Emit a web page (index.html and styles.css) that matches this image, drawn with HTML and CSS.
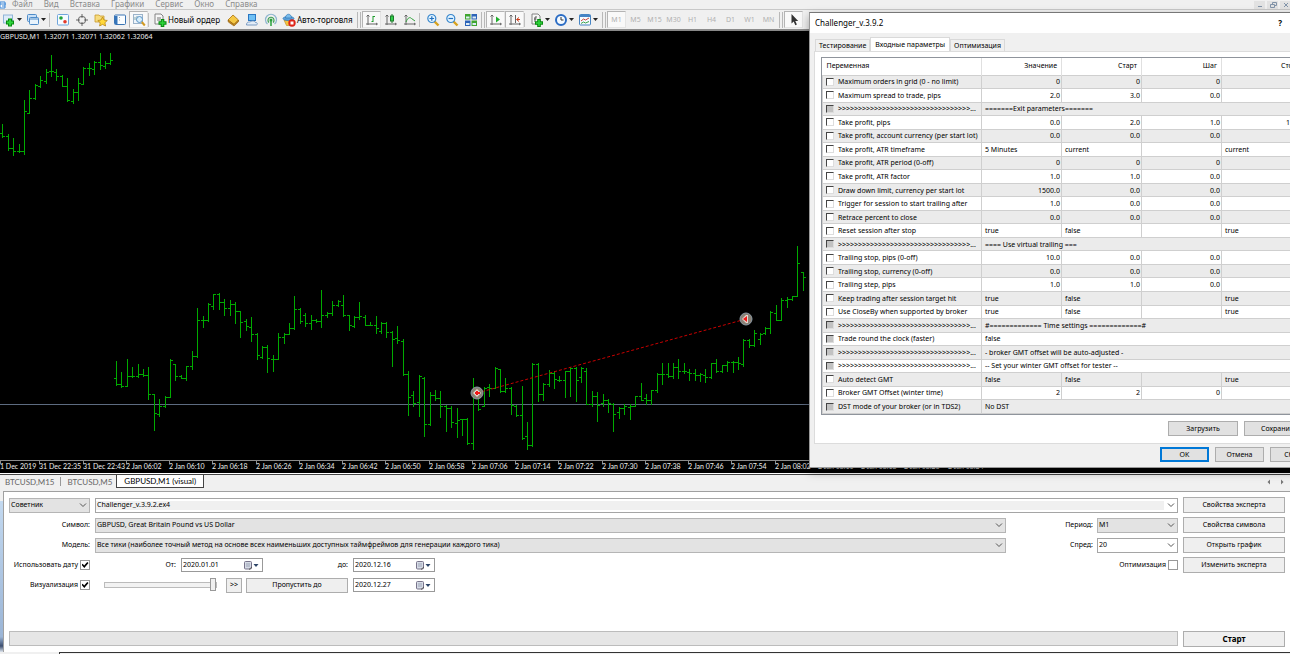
FILE: index.html
```html
<!DOCTYPE html>
<html lang="ru">
<head>
<meta charset="utf-8">
<title>Challenger_v.3.9.2</title>
<link rel="stylesheet" href="styles.css">
</head>
<body>
<svg class="defs" width="0" height="0" aria-hidden="true">
  <symbol id="chev" viewBox="0 0 8 8"><path d="M1 2.5 4 5.5 7 2.5" fill="none" stroke="#555" stroke-width="1"/></symbol>
  <symbol id="drop" viewBox="0 0 5 3"><path d="M0 0H5L2.500 3Z" fill="#222"/></symbol>
  <symbol id="cal" viewBox="0 0 15 9"><rect x=".5" y=".5" width="7" height="7.500" rx="1" fill="#d6dbe6" stroke="#77738a"/><path d="M2 3h4M2 5h4" stroke="#9ba3b5"/><path d="M5 8.500 8 6" stroke="#555"/><path d="M9.500 3h5L12 6Z" fill="#2d4568"/></symbol>
</svg>

<nav class="menubar">
  <svg class="menu-icon" viewBox="0 0 7 8"><path d="M0 1h5v6H0z" fill="#fff" stroke="#3b86d6"/><path d="M0 3h6M2 5h3" stroke="#3b86d6"/></svg>
  <a href="#">Файл</a><a href="#">Вид</a><a href="#">Вставка</a><a href="#">Графики</a><a href="#">Сервис</a><a href="#">Окно</a><a href="#">Справка</a>
  <svg class="winctl" viewBox="0 0 36 8"><path d="M0 0h11v8H0zM13 0h11v8H13zM26 0h10v8H26z" fill="#e2e2e2"/><path d="M4 5.500h4M16.500 3.500h4v3h-4zM18.500 3V1.500h4v3H21M30 2l4 4M34 2l-4 4" fill="none" stroke="#8193a8"/></svg>
</nav>

<div class="toolbar">
  <button class="tb split" aria-label="Новый график"><svg viewBox="0 0 14 14"><rect x="1.500" y="2" width="9" height="8" fill="#dcebf8" stroke="#8fb4d8"/><path d="M8 5.500v8M4 9.500h8" stroke="#088a10" stroke-width="4"/><path d="M8 6.500v6M5 9.500h6" stroke="#2fd53c" stroke-width="2"/></svg><svg class="arr"><use href="#drop"/></svg></button>
  <button class="tb split" aria-label="Профили"><svg viewBox="0 0 14 14"><rect x="1.500" y="1.500" width="9" height="7" rx="1" fill="#c9e0f6" stroke="#4f8cc9"/><rect x="3.500" y="4.500" width="9" height="7" rx="1" fill="#e8f3fc" stroke="#4f8cc9"/><path d="M3.500 6h9" stroke="#4f8cc9"/></svg><svg class="arr"><use href="#drop"/></svg></button>
  <i class="sep"></i>
  <button class="tb" aria-label="Обзор рынка"><svg viewBox="0 0 14 14"><rect x="1.500" y="1.500" width="11" height="10.500" rx="1" fill="#f6fbff" stroke="#6fa5dc"/><circle cx="5" cy="5" r="1.800" fill="#21a33a"/><circle cx="9" cy="8.700" r="1.800" fill="#e3392a"/></svg></button>
  <button class="tb" aria-label="Окно данных"><svg viewBox="0 0 14 14"><circle cx="7" cy="7" r="3.700" fill="none" stroke="#666"/><path d="M7 1v4M7 9v4M1 7h4M9 7h4" stroke="#666"/></svg></button>
  <button class="tb" aria-label="Навигатор"><svg viewBox="0 0 14 14"><path d="M1 2h4l1 1h4v6H1z" fill="#f7dc7e" stroke="#c99a2b" stroke-width=".8"/><path d="m8.500 4 1.500 3 3.300.5-2.400 2.200.7 3.300-3.100-1.600L5.600 13l.6-3.300L3.800 7.500 7 7z" fill="#ffd83a" stroke="#b8861b" stroke-width=".8"/></svg></button>
  <button class="tb" aria-label="Терминал"><svg viewBox="0 0 14 14"><rect x="1.500" y="2" width="11" height="9.500" rx="1" fill="#fafdff" stroke="#3a74b4"/><path d="M2 3h2.500v8H2z" fill="#3474ba"/><path d="M6 4.500h1M6 7h1" stroke="#9ab"/></svg></button>
  <button class="tb on" aria-label="Тестер стратегий"><svg viewBox="0 0 14 14"><rect x="1.500" y="1.500" width="9" height="9" fill="#eef5fb" stroke="#9bb3ca"/><path d="M3 7V4M5 8V3" stroke="#8aa"/><circle cx="7.500" cy="6.500" r="3" fill="#d8eefa" stroke="#5b93c6"/><path d="m9.800 9 3 3.500" stroke="#d29a22" stroke-width="2"/></svg></button>
  <i class="sep wide"></i>
  <button class="tb text"><svg viewBox="0 0 14 14"><path d="M2 1h6l2 2v8H2z" fill="#f7f7f7" stroke="#777" stroke-width=".9"/><path d="M4 5h4M4 7h3" stroke="#777"/><path d="M9.500 6v8M5.500 10h8" stroke="#088a10" stroke-width="3.600"/><path d="M9.500 7v6M6.500 10h6" stroke="#2fd53c" stroke-width="1.600"/></svg>Новый ордер</button>
  <button class="tb" aria-label="MetaEditor"><svg viewBox="0 0 14 14"><path d="M2 7 7 2l5.500 5-4.500 4.500z" fill="#f5c945" stroke="#a9700f" stroke-width=".8"/><path d="m2 7 .3 2L8 13l4.500-4.300V7L8 11.500z" fill="#c98c1c" stroke="#8d5a0b" stroke-width=".6"/></svg></button>
  <button class="tb" aria-label="Маркет"><svg viewBox="0 0 14 14"><rect x="3.500" y="1.500" width="7" height="6" fill="#6fc0f4" stroke="#2a77c2"/><path d="M1.500 12c0-3 2-3 3-3s2-1.500 4-1 1 1.500 2.500 1.500 2 2.500 0 2.500z" fill="#e4edf7" stroke="#6d91bb" stroke-width=".9"/></svg></button>
  <button class="tb" aria-label="Сигналы"><svg viewBox="0 0 14 14"><path d="M3.500 11A5.500 5.500 0 1 1 10.500 11" fill="none" stroke="#8fb6cf" stroke-width="1.200"/><path d="M5 9.500a3 3 0 1 1 4 0" fill="none" stroke="#3f9f55" stroke-width="1.200"/><circle cx="7" cy="7" r="1.500" fill="#2aa23c"/><path d="M7 8v5" stroke="#2aa23c" stroke-width="1.500"/></svg></button>
  <button class="tb text auto"><svg viewBox="0 0 14 14"><path d="M2 7h9l-2.500 5.500h-4z" fill="#f3c542" stroke="#b8861b" stroke-width=".6"/><ellipse cx="6.500" cy="5.500" rx="5.500" ry="2" fill="#5da4dc" stroke="#2f76b4" stroke-width=".7"/><path d="M3.500 5c0-5 6-5 6 0z" fill="#79bcec" stroke="#2f76b4" stroke-width=".7"/><circle cx="10" cy="10" r="3.700" fill="#de2418"/><rect x="8.500" y="8.500" width="3" height="3" fill="#fff"/></svg>Авто-торговля</button>
  <i class="grip"></i>
  <button class="tb on" aria-label="Бары"><svg viewBox="0 0 14 14"><path d="M3 2v10M1 11h11M11 10l1.500 1-1.500 1M1.500 3.500 3 2l1.500 1.500" fill="none" stroke="#666"/><path d="M8 3v6M8 8.500h-1.500M8 3.500h2" stroke="#1d9a2b" fill="none"/></svg></button>
  <button class="tb" aria-label="Свечи"><svg viewBox="0 0 14 14"><path d="M3 2v10M1 11h11M11 10l1.500 1-1.500 1M1.500 3.500 3 2l1.500 1.500" fill="none" stroke="#666"/><path d="M8 1v9" stroke="#1d7a2b"/><rect x="6.500" y="3" width="3" height="5" fill="#2fd04a" stroke="#1d7a2b"/></svg></button>
  <button class="tb" aria-label="Линия"><svg viewBox="0 0 14 14"><path d="M3 2v10M1 11h11M11 10l1.500 1-1.500 1M1.500 3.500 3 2l1.500 1.500" fill="none" stroke="#666"/><path d="M3 9c2-5 4-5 5.500-3.500L12 8" stroke="#2fa03a" fill="none"/></svg></button>
  <i class="sep"></i>
  <button class="tb" aria-label="Увеличить"><svg viewBox="0 0 14 14"><path d="m8.500 8.500 4 4" stroke="#d8a21e" stroke-width="2.400"/><circle cx="5.800" cy="5.500" r="4" fill="#e3f4ff" stroke="#3a87cc" stroke-width="1.200"/><path d="M3.500 5.500h4.600M5.800 3.200v4.600" stroke="#2472c0" stroke-width="1.200"/></svg></button>
  <button class="tb" aria-label="Уменьшить"><svg viewBox="0 0 14 14"><path d="m8.500 8.500 4 4" stroke="#d8a21e" stroke-width="2.400"/><circle cx="5.800" cy="5.500" r="4" fill="#e3f4ff" stroke="#3a87cc" stroke-width="1.200"/><path d="M3.500 5.500h4.600" stroke="#2472c0" stroke-width="1.200"/></svg></button>
  <button class="tb" aria-label="Окна"><svg viewBox="0 0 14 14"><path d="M1 1h5.500v5.500H1zM7.500 7.500H13V13H7.500z" fill="#3fa52f"/><path d="M7.500 1H13v5.500H7.500zM1 7.500h5.500V13H1z" fill="#2c63b8"/><path d="M2 3.500h3.500v2H2zM8.500 3.500H12v2H8.500zM2 10h3.500v2H2zM8.500 10H12v2H8.500z" fill="#dcebf5"/></svg></button>
  <i class="grip"></i>
  <button class="tb on" aria-label="Автопрокрутка"><svg viewBox="0 0 14 14"><path d="M3 2v10M1 11h11M11 10l1.500 1-1.500 1M1.500 3.500 3 2l1.500 1.500" fill="none" stroke="#666"/><path d="M7 3.500v6l4-3z" fill="#1fae2c"/></svg></button>
  <button class="tb on" aria-label="Сдвиг графика"><svg viewBox="0 0 14 14"><path d="M3 2v10M1 11h11M11 10l1.500 1-1.500 1M1.500 3.500 3 2l1.500 1.500M7.500 2v8" fill="none" stroke="#666"/><path d="M12 6.500H9M11 4.500l-2.500 2 2.500 2" fill="none" stroke="#d0401e"/></svg></button>
  <i class="sep"></i>
  <button class="tb split" aria-label="Индикаторы"><svg viewBox="0 0 14 14"><path d="M2 1h6l2 2v8H2z" fill="#f7f7f7" stroke="#777" stroke-width=".9"/><path d="M5 9V4h2M4 6h2.500" fill="none" stroke="#555"/><path d="M9 6v8M5 10h8" stroke="#088a10" stroke-width="3.600"/><path d="M9 7v6M6 10h6" stroke="#2fd53c" stroke-width="1.600"/></svg><svg class="arr"><use href="#drop"/></svg></button>
  <button class="tb split" aria-label="Периоды"><svg viewBox="0 0 14 14"><circle cx="7" cy="7" r="5" fill="#f4faff" stroke="#2b6cc4" stroke-width="2"/><path d="M7 4v3h2.500" fill="none" stroke="#333"/></svg><svg class="arr"><use href="#drop"/></svg></button>
  <button class="tb split" aria-label="Шаблоны"><svg viewBox="0 0 14 14"><rect x="1.500" y="1.500" width="11" height="10.500" rx="1" fill="#f6fbff" stroke="#4684c4"/><path d="M1.500 3h11" stroke="#4684c4" stroke-width="2"/><path d="m3 8 2.500-2 2 1L11 5" fill="none" stroke="#c9463c"/><path d="m3 10.500 2.500-1.500 2 1L11 8.500" fill="none" stroke="#3aa348"/></svg><svg class="arr"><use href="#drop"/></svg></button>
  <i class="grip"></i>
  <button class="tb on tf">M1</button><button class="tb tf">M5</button><button class="tb tf">M15</button><button class="tb tf">M30</button><button class="tb tf">H1</button><button class="tb tf">H4</button><button class="tb tf">D1</button><button class="tb tf">W1</button><button class="tb tf">MN</button>
  <i class="grip"></i>
  <button class="tb on" aria-label="Курсор"><svg viewBox="0 0 14 14"><path d="M4.500 1v9.500l2.200-2 1.600 3.700 1.600-.7-1.600-3.500h2.900z" fill="#333"/></svg></button>
</div>

<main class="chart">
  <svg id="chart" viewBox="0 31 1290 443" preserveAspectRatio="xMinYMin slice"></svg>
</main>

<div class="charttabs">
  <button>BTCUSD,M15</button><i></i><button>BTCUSD,M5</button><button class="active">GBPUSD,M1 (visual)</button>
  <svg class="tabnav" viewBox="0 0 20 8"><path d="M4 1.500v5L1.500 4zM15 1.500v5L17.500 4z" fill="#777"/></svg>
</div>

<section class="tester">
  <div class="sidebar"></div>
  <form class="panel">
    <div class="cols">
      <div class="rows">
        <div class="row">
          <span class="combo gray kind"><select aria-label="Тип"><option>Советник</option></select><svg><use href="#chev"/></svg></span>
          <span class="combo ea grow"><select aria-label="Эксперт"><option>Challenger_v.3.9.2.ex4</option></select><svg><use href="#chev"/></svg></span>
        </div>
        <div class="row">
          <label class="lead" for="sym">Символ:</label>
          <span class="combo gray grow"><select id="sym"><option>GBPUSD, Great Britain Pound vs US Dollar</option></select><svg><use href="#chev"/></svg></span>
          <label class="mid" for="per">Период:</label>
          <span class="combo gray short"><select id="per"><option>M1</option></select><svg><use href="#chev"/></svg></span>
        </div>
        <div class="row">
          <label class="lead" for="mod">Модель:</label>
          <span class="combo gray grow"><select id="mod"><option>Все тики (наиболее точный метод на основе всех наименьших доступных таймфреймов для генерации каждого тика)</option></select><svg><use href="#chev"/></svg></span>
          <label class="mid" for="spr">Спред:</label>
          <span class="combo short"><select id="spr"><option>20</option></select><svg><use href="#chev"/></svg></span>
        </div>
        <div class="row">
          <label class="lead check">Использовать дату<input type="checkbox" checked></label>
          <label class="from" for="d1">От:</label>
          <span class="date"><input id="d1" value="2020.01.01"><svg><use href="#cal"/></svg></span>
          <label class="to" for="d2">до:</label>
          <span class="date"><input id="d2" value="2020.12.16"><svg><use href="#cal"/></svg></span>
          <label class="check end">Оптимизация<input type="checkbox"></label>
        </div>
        <div class="row">
          <label class="lead check">Визуализация<input type="checkbox" checked></label>
          <input class="speed" type="range" value="100" aria-label="Скорость">
          <button class="btn tiny" type="button">&gt;&gt;</button>
          <button class="btn" type="button">Пропустить до</button>
          <span class="date"><input aria-label="Дата пропуска" value="2020.12.27"><svg><use href="#cal"/></svg></span>
        </div>
      </div>
      <div class="actions">
        <button class="btn" type="button">Свойства эксперта</button>
        <button class="btn" type="button">Свойства символа</button>
        <button class="btn" type="button">Открыть график</button>
        <button class="btn" type="button">Изменить эксперта</button>
      </div>
    </div>
    <div class="run"><div class="progress"></div><button class="btn start" type="button">Старт</button></div>
  </form>
</section>
<div class="bottomtabs"></div>

<div class="dialog" role="dialog" aria-labelledby="dt">
  <header><h1 id="dt">Challenger_v.3.9.2</h1><button aria-label="Справка">?</button></header>
  <div class="tabs"><button>Тестирование</button><button class="active">Входные параметры</button><button>Оптимизация</button></div>
  <div class="pane">
    <div class="list">
    <table>
      <colgroup><col class="c1"><col class="c2"><col class="c2"><col class="c2"><col class="c2"></colgroup>
      <thead><tr><th class="l">Переменная</th><th>Значение</th><th>Старт</th><th>Шаг</th><th>Стоп</th></tr></thead>
      <tbody>
        <tr><td><label><input type="checkbox">Maximum orders in grid (0 - no limit)</label></td><td class="n">0</td><td class="n">0</td><td class="n">0</td><td class="n"></td></tr>
        <tr><td><label><input type="checkbox">Maximum spread to trade, pips</label></td><td class="n">2.0</td><td class="n">3.0</td><td class="n">0.0</td><td class="n">0.0</td></tr>
        <tr><td><label><input type="checkbox" disabled>&gt;&gt;&gt;&gt;&gt;&gt;&gt;&gt;&gt;&gt;&gt;&gt;&gt;&gt;&gt;&gt;&gt;&gt;&gt;&gt;&gt;&gt;&gt;&gt;&gt;&gt;&gt;&gt;&gt;&gt;&gt;&gt;&gt;...</label></td><td colspan="4">=======Exit parameters=======</td></tr>
        <tr><td><label><input type="checkbox">Take profit, pips</label></td><td class="n">0.0</td><td class="n">2.0</td><td class="n">1.0</td><td class="n">15.0</td></tr>
        <tr><td><label><input type="checkbox">Take profit, account currency (per start lot)</label></td><td class="n">0.0</td><td class="n">0.0</td><td class="n">0.0</td><td class="n">0.0</td></tr>
        <tr><td><label><input type="checkbox">Take profit, ATR timeframe</label></td><td>5 Minutes</td><td>current</td><td></td><td>current</td></tr>
        <tr><td><label><input type="checkbox">Take profit, ATR period (0-off)</label></td><td class="n">0</td><td class="n">0</td><td class="n">0</td><td></td></tr>
        <tr><td><label><input type="checkbox">Take profit, ATR factor</label></td><td class="n">1.0</td><td class="n">1.0</td><td class="n">0.0</td><td class="n">0.0</td></tr>
        <tr><td><label><input type="checkbox">Draw down limit, currency per start lot</label></td><td class="n">1500.0</td><td class="n">0.0</td><td class="n">0.0</td><td class="n">0.0</td></tr>
        <tr><td><label><input type="checkbox">Trigger for session to start trailing after</label></td><td class="n">1.0</td><td class="n">0.0</td><td class="n">0.0</td><td class="n">0.0</td></tr>
        <tr><td><label><input type="checkbox">Retrace percent to close</label></td><td class="n">0.0</td><td class="n">0.0</td><td class="n">0.0</td><td class="n">0.0</td></tr>
        <tr><td><label><input type="checkbox">Reset session after stop</label></td><td>true</td><td>false</td><td></td><td>true</td></tr>
        <tr><td><label><input type="checkbox" disabled>&gt;&gt;&gt;&gt;&gt;&gt;&gt;&gt;&gt;&gt;&gt;&gt;&gt;&gt;&gt;&gt;&gt;&gt;&gt;&gt;&gt;&gt;&gt;&gt;&gt;&gt;&gt;&gt;&gt;&gt;&gt;&gt;&gt;...</label></td><td colspan="4">==== Use virtual trailing ===</td></tr>
        <tr><td><label><input type="checkbox">Trailing stop, pips (0-off)</label></td><td class="n">10.0</td><td class="n">0.0</td><td class="n">0.0</td><td class="n">0.0</td></tr>
        <tr><td><label><input type="checkbox">Trailing stop, currency (0-off)</label></td><td class="n">0.0</td><td class="n">0.0</td><td class="n">0.0</td><td class="n">0.0</td></tr>
        <tr><td><label><input type="checkbox">Trailing step, pips</label></td><td class="n">1.0</td><td class="n">1.0</td><td class="n">0.0</td><td class="n">0.0</td></tr>
        <tr><td><label><input type="checkbox">Keep trading after session target hit</label></td><td>true</td><td>false</td><td></td><td>true</td></tr>
        <tr><td><label><input type="checkbox">Use CloseBy when supported by broker</label></td><td>true</td><td>false</td><td></td><td>true</td></tr>
        <tr><td><label><input type="checkbox" disabled>&gt;&gt;&gt;&gt;&gt;&gt;&gt;&gt;&gt;&gt;&gt;&gt;&gt;&gt;&gt;&gt;&gt;&gt;&gt;&gt;&gt;&gt;&gt;&gt;&gt;&gt;&gt;&gt;&gt;&gt;&gt;&gt;&gt;...</label></td><td colspan="4">#============= Time settings =============#</td></tr>
        <tr><td><label><input type="checkbox" disabled>Trade round the clock (faster)</label></td><td colspan="4">false</td></tr>
        <tr><td><label><input type="checkbox" disabled>&gt;&gt;&gt;&gt;&gt;&gt;&gt;&gt;&gt;&gt;&gt;&gt;&gt;&gt;&gt;&gt;&gt;&gt;&gt;&gt;&gt;&gt;&gt;&gt;&gt;&gt;&gt;&gt;&gt;&gt;&gt;&gt;&gt;...</label></td><td colspan="4">- broker GMT offset will be auto-adjusted -</td></tr>
        <tr><td><label><input type="checkbox" disabled>&gt;&gt;&gt;&gt;&gt;&gt;&gt;&gt;&gt;&gt;&gt;&gt;&gt;&gt;&gt;&gt;&gt;&gt;&gt;&gt;&gt;&gt;&gt;&gt;&gt;&gt;&gt;&gt;&gt;&gt;&gt;&gt;&gt;...</label></td><td colspan="4">-- Set your winter GMT offset for tester --</td></tr>
        <tr><td><label><input type="checkbox">Auto detect GMT</label></td><td>false</td><td>false</td><td></td><td>true</td></tr>
        <tr><td><label><input type="checkbox">Broker GMT Offset (winter time)</label></td><td class="n">2</td><td class="n">2</td><td class="n">0</td><td></td></tr>
        <tr><td><label><input type="checkbox" disabled>DST mode of your broker (or in TDS2)</label></td><td colspan="4">No DST</td></tr>
      </tbody>
    </table>
    </div>
    <div class="files"><button class="btn">Загрузить</button><button class="btn">Сохранить</button></div>
  </div>
  <footer><button class="btn ok">OK</button><button class="btn">Отмена</button><button class="btn">Сброс</button></footer>
</div>
<script src="chart.js"></script>
</body>
</html>
```
FILE: styles.css
```css
* { box-sizing: border-box; }
html, body { height: 100%; }
body {
  margin: 0;
  position: relative;
  display: flex;
  flex-direction: column;
  overflow: hidden;
  background: #f0f0f0;
  color: #000;
  font: 7px/12px "Noto Sans", "Liberation Sans", sans-serif;
}
button, input, select { font: inherit; color: inherit; margin: 0; padding: 0; border-radius: 0; }
button { border: 0; background: none; }
label { white-space: nowrap; }
.defs { display: none; }

.menubar {
  display: flex;
  align-items: center;
  gap: 11px;
  height: 10px;
  border-bottom: 1px solid #c8c8c8;
  font-size: 8px;
}
.menubar a { color: #8a8a8a; text-decoration: none; line-height: 8px; margin-top: -2px; }
.menu-icon { width: 7px; height: 8px; margin-right: -6px; }
.winctl { width: 36px; height: 8px; margin-left: auto; }

.toolbar {
  display: flex;
  align-items: center;
  height: 20px;
  background: #f0f0f0;
  border-bottom: 1px solid #8c8c8c;
  overflow: hidden;
}
.tb { flex: none; width: 19px; height: 17px; display: flex; align-items: center; justify-content: center; }
.tb svg { width: 14px; height: 14px; flex: none; }
.tb .arr { width: 5px; height: 3px; margin-left: 1px; }
.tb.split { width: 25px; padding-right: 1px; }
.tb.on { background: #f9f9f9; border: 1px solid; border-color: #b4b4b4 #e4e4e4 #e4e4e4 #b4b4b4; }
.tb.text { width: 70px; justify-content: flex-start; gap: 1px; font-size: 8px; white-space: nowrap; }
.tb.auto { width: 76px; padding-left: 2px; }
.tb.tf { color: #b0b0b0; }
.sep { flex: none; width: 4px; height: 14px; border-left: 1px solid #c0c0c0; }
.sep.wide { width: 5px; }
.toolbar .split + .split { margin-left: -1px; }
.grip { flex: none; width: 4px; height: 16px; border: solid #b8b8b8; border-width: 0 1px; margin: 0 1px; }

.chart { flex: 1; min-height: 0; background: #000; border-top: 1px solid #888; }
.chart svg { display: block; width: 100%; height: 100%; }
.bars { fill: none; stroke: #00aa00; shape-rendering: crispEdges; }
.bid { stroke: #5d6b80; }
.deal { stroke: #c80000; stroke-dasharray: 3 2; }
.axis { stroke: #8a8a8a; }
.marker { fill: #8a8175; stroke: #8c9aa5; }
.halo { fill: #e8d8d0; }
.marker-arrow { fill: #f01818; }
.caption { fill: #eee; font: 7px "Noto Sans", sans-serif; }
.time { fill: #eee; font: 7px Lato, "Liberation Sans", sans-serif; }

.charttabs {
  display: flex;
  align-items: stretch;
  height: 17px;
  padding: 0 4px 3px 0;
  background: #f0f0f0;
  border-top: 1px solid #444;
  box-shadow: 0 -1px #fff;
  font: 8px/12px Lato, "Liberation Sans", sans-serif;
}
.charttabs button { color: #666; padding: 0 4px; }
.charttabs button:first-child { padding-left: 5px; }
.charttabs i { width: 1px; height: 9px; background: #999; margin: 2px 2px; }
.charttabs button.active { color: #000; background: #fff; border: 1px solid #444; border-top: 0; padding: 0 7px; }
.tabnav { width: 20px; height: 8px; margin: 3px 0 0 auto; }

.tester { display: flex; height: 161px; }
.sidebar { width: 3px; margin-top: 10px; background: linear-gradient(#c3d9f0, #9bb5d6 90%, #3d4f70 96%, #dfe6ee); }
.panel {
  flex: 1;
  min-width: 0;
  display: flex;
  flex-direction: column;
  justify-content: space-between;
  padding: 5px;
  background: #fff;
  border: solid #a0a0a0;
  border-width: 1px 0 0 1px;
}
.cols, .run { display: flex; gap: 5px; }
.rows { flex: 1; min-width: 0; }
.rows, .actions { display: flex; flex-direction: column; gap: 4px; }
.row { display: flex; align-items: center; height: 16px; }
.grow { flex: 1; min-width: 0; }
.lead { width: 81px; margin-right: 5px; text-align: right; }
.mid { width: 87px; margin-right: 4px; text-align: right; }
.from { width: 81px; margin-right: 5px; text-align: right; }
.to { width: 85px; margin-right: 5px; text-align: right; }
.combo { display: grid; align-items: center; height: 15px; background: #fff; border: 1px solid #a5a5a5; }
.combo select, .combo svg { grid-area: 1 / 1; }
.combo select { width: 100%; height: 13px; padding: 0 1px; border: 0; background: none; appearance: none; }
.combo svg { width: 8px; height: 8px; justify-self: end; margin-right: 2px; pointer-events: none; }
.combo.gray { background: #e3e3e3; border-color: #b5b5b5; }
.combo.ea select { background: linear-gradient(#f0f0f0, #f0f0f0) 0 50% / calc(100% - 13px) 9px no-repeat; }
.kind { width: 81px; margin-right: 5px; }
.short { width: 81px; }
.check { display: flex; align-items: center; justify-content: flex-end; gap: 2px; }
.check.end { margin-left: auto; }
.check input {
  appearance: none;
  display: grid;
  place-items: center;
  width: 10px;
  height: 10px;
  border: 1px solid #999;
  background: #fff;
}
.check input:checked::after {
  content: "";
  width: 7px;
  height: 6px;
  background: #000;
  clip-path: polygon(0 45%, 18% 30%, 38% 58%, 82% 0, 100% 16%, 40% 100%);
}
.date { display: flex; align-items: center; width: 82px; height: 14px; padding: 0 3px 0 1px; background: #fff; border: 1px solid #999; }
.date input { flex: 1; min-width: 0; height: 12px; border: 0; background: none; }
.date svg { width: 15px; height: 9px; }
.btn { height: 15px; background: #efefef; border: 1px solid #adadad; text-align: center; line-height: 12px; }
.row .btn { width: 102px; margin-right: 5px; }
.row .btn.tiny { width: 16px; margin-right: 4px; }
.speed { appearance: none; width: 113px; height: 14px; margin: 0 9px; background: none; }
.speed::-webkit-slider-runnable-track { height: 6px; background: #f2f2f2; border: 1px solid #bbb; }
.speed::-webkit-slider-thumb { appearance: none; width: 6px; height: 13px; margin-top: -5px; background: #f0f0f0; border: 1px solid #999; }
.actions { width: 102px; flex: none; }
.actions .btn, .run .btn { height: 16px; }
.progress { flex: 1; height: 15px; background: #e6e6e6; border: 1px solid #bcbcbc; }
.run .btn { width: 102px; font-weight: bold; font-size: 8px; }
.bottomtabs { height: 2px; margin-left: 59px; border-left: 1px solid #333; border-top: 1px solid #333; background: #f0f0f0; }

.dialog {
  position: absolute;
  left: 809px;
  top: 12px;
  width: 517px;
  display: flex;
  flex-direction: column;
  background: #f0f0f0;
  border: 1px solid #999;
  border-top-color: #777;
  box-shadow: 0 4px 9px rgba(0, 0, 0, .35);
}
.dialog header { display: flex; align-items: center; height: 20px; padding: 0 43px 0 5px; background: #fff; font-size: 8px; }
.dialog h1 { flex: 1; margin: 0; font: inherit; }
.dialog header button { font-weight: bold; }
.tabs { display: flex; align-items: flex-end; padding: 4px 0 0 5px; }
.tabs button { height: 12px; padding: 0 3px; border: 1px solid #d9d9d9; border-bottom: 0; line-height: 11px; }
.tabs .active { height: 14px; padding: 0 4px; background: #fff; }
.pane { margin: 0 4px; padding: 5px 6px 7px; background: #fff; border: 1px solid #dcdcdc; }
.list { padding-right: 12px; background: #f0f0f0; border: 1px solid #8f949c; }
table { table-layout: fixed; width: 479px; height: 356px; border-collapse: collapse; background: #fff; }
.c1 { width: 159px; }
.c2 { width: 80px; }
th { height: 17px; padding: 0 4px; font-weight: normal; text-align: right; line-height: 12px; border-right: 1px solid #e0e0e0; }
th.l { text-align: left; }
td { padding: 0 3px; line-height: 11px; white-space: nowrap; overflow: hidden; border: 1px solid #cfcfcf; }
td.n { text-align: right; padding: 0 1px; }
tbody tr:nth-child(odd) { background: #ebebeb; }
td label { display: flex; align-items: center; gap: 4px; }
td input { appearance: none; flex: none; width: 8px; height: 8px; background: #fff; border: 1px solid; border-color: #444 #ddd #ddd #444; }
td input:disabled { background: #c2c2c2; }
.files { display: flex; justify-content: flex-end; gap: 6px; padding-top: 6px; }
.dialog .btn { background: #e1e1e1; }
.files .btn { width: 70px; }
.dialog footer { display: flex; justify-content: flex-end; gap: 6px; padding: 3px 6px 5px; }
footer .btn { width: 49px; }
footer .btn.ok { border: 1px solid #0078d7; box-shadow: inset 0 0 0 1px #0078d7; }
```
FILE: chart.js
```js
// Each group: first bar x, y origin, then [high, low, open, close] in thirds of a pixel below the origin.
const STEP = 5.407;
const groups = [
  { x: 2.3, y: 40, bars: [
    [253,292,278,287],[282,329,288,323],[295,346,325,334],[312,335,334,334],[180,341,334,212],[150,219,218,174],[132,176,173,136],
    [109,140,139,121],[88,130,124,95],[45,107,92,94],[88,119,95,108],[106,137,109,137],[113,182,137,181],[148,188,184,157],
    [113,181,155,130],[81,131,131,83],[69,104,84,84],[63,103,87,66],[40,86,66,76],[63,85,79,69],[40,71,70,60]] },
  { x: 116, y: 270, bars: [
    [274,344,325,341],[305,350,341,349],[268,349,349,317],[292,320,317,319],[281,320,318,311],[298,318,311,316],[292,388,316,373],
    [373,481,373,428],[388,438,432,409],[379,412,409,380],[268,380,380,271],[281,329,281,319],[316,325,319,323],[287,331,323,288],
    [242,298,289,257],[114,261,257,151],[139,172,151,151],[98,154,150,103],[72,117,109,73],[70,118,73,97],[86,135,97,115],
    [89,135,115,103],[97,158,103,124],[122,200,124,157],[146,181,154,169],[141,214,170,191],[190,268,191,256],[229,264,262,230],
    [224,306,230,263],[256,304,268,267],[188,268,267,200],[188,218,200,191],[158,192,191,175],[78,178,175,117],[115,158,117,154],
    [129,167,134,159],[135,176,160,151],[148,156,151,154],[60,170,154,136],[127,142,136,129],[92,134,130,104],[90,108,104,92],
    [74,138,106,135],[135,180,136,166],[138,170,168,140],[97,146,140,139],[135,166,140,165],[157,166,165,164],[138,188,164,173],
    [157,188,183,158],[155,200,158,187],[183,287,187,206],[168,218,205,210],[207,316,212,311]] },
  { x: 408, y: 300, bars: [
    [213,345,222,290],[274,319,285,308],[226,348,307,228],[231,409,235,373],[276,375,373,286],[270,301,286,295],[274,350,295,317],
    [315,393,319,325],[318,380,325,367],[324,410,369,360],[356,405,357,356],[355,431,356,430],[234,446,430,264],[264,331,264,328],
    [262,319,317,263],[252,289,262,265],[202,265,264,204],[207,276,207,274],[234,276,274,264],[261,342,265,315],[315,349,317,344],
    [258,416,344,413],[366,446,408,436],[190,437,436,191],[190,302,191,283],[249,301,283,251],[210,259,252,219],[213,265,220,238],
    [228,244,239,241],[213,290,240,213],[202,288,213,204],[202,302,204,240],[202,245,230,204],[203,313,214,312],[274,318,312,287],
    [276,362,288,316],[283,319,310,300],[297,336,300,309],[310,393,312,342],[322,354,337,325],[312,342,325,318],[312,356,320,319],
    [288,319,318,289],[249,300,289,299]] },
  { x: 646, y: 230, bars: [
    [492,523,505,511],[480,523,511,481],[429,485,481,431],[400,461,431,431],[400,440,431,437],[400,445,438,412],[387,445,412,424],
    [400,430,424,424],[417,449,426,428],[417,450,430,435],[430,454,435,431],[417,457,434,441],[400,445,441,400],[388,425,400,422],
    [404,426,423,406],[392,424,406,395],[394,425,395,396],[382,418,396,400],[328,408,401,331],[328,350,331,344],[300,349,344,310],
    [309,342,326,311],[292,312,310,294],[243,308,294,247],[225,270,249,271],[205,271,271,210],[200,232,211,207],[197,211,207,199],
    [47,199,199,100],[125,180,125,140]] }
];

let d = '';
for (const g of groups) {
  g.bars.forEach(([h, l, o, c], i) => {
    const x = Math.round(g.x + i * STEP) + 0.5;
    const y = v => Math.round(g.y + v / 3);
    d += `M${x} ${y(h)}V${y(l) + 1}M${x - 2.5} ${y(o) + 0.5}h2M${x + 0.5} ${y(c) + 0.5}h2`;
  });
}

const times = ['1 Dec 2019', '31 Dec 22:35', '31 Dec 22:43'];
for (let m = 362; m <= 514; m += 8) {
  times.push(`2 Jan 0${Math.floor(m / 60)}:${String(m % 60).padStart(2, '0')}`);
}
let labels = '', ticks = '';
times.forEach((t, i) => {
  const x = Math.max(0, Math.round(-4 + i * 43.25));
  labels += `<text class="time" x="${x}" y="469">${t}</text>`;
  ticks += `M${x + 0.5} 460v4`;
});

document.getElementById('chart').innerHTML =
  `<path class="bid" d="M0 404.5H1290"/><path class="bars" d="${d}"/>` +
  `<path class="deal" d="M477 393L746 319"/>` +
  `<circle class="marker" cx="477" cy="393" r="6"/><path class="halo" d="M477 389l4 4-4 4-4-4z"/><path class="marker-arrow" d="M476 391h2v1h2v2h-2v1h-2v-1h-1v-2h1z"/>` +
  `<circle class="marker" cx="746" cy="319" r="6"/><path class="halo" d="M748 315v8h-2l-4-4 4-4z"/><path class="marker-arrow" d="M747 316v6l-4-3z"/>` +
  `<path class="axis" d="M0 460.5H1290"/><path class="axis" d="${ticks}"/>` +
  `<text class="caption" x="0" y="39">GBPUSD,M1&#160; 1.32071 1.32071 1.32062 1.32064</text>` + labels;
```
